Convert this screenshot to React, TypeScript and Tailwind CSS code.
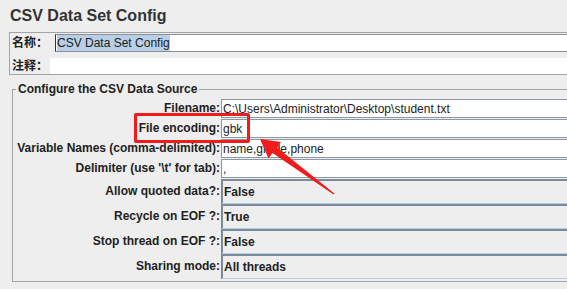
import React from "react";

const textRows = [
  { label: "Filename:", value: "C:\\Users\\Administrator\\Desktop\\student.txt" },
  { label: "File encoding:", value: "gbk" },
  { label: "Variable Names (comma-delimited):", value: "name,grade,phone" },
  { label: "Delimiter (use '\\t' for tab):", value: "," },
];

const comboRows = [
  { label: "Allow quoted data?:", value: "False" },
  { label: "Recycle on EOF ?:", value: "True" },
  { label: "Stop thread on EOF ?:", value: "False" },
  { label: "Sharing mode:", value: "All threads" },
];

const cjk = "font-['Liberation_Sans','Noto_Sans_CJK_SC',sans-serif] font-bold";

const Arrow = () => (
  <svg
    className="absolute left-0 top-0 pointer-events-none"
    width="567"
    height="289"
    viewBox="0 0 567 289"
  >
    <polygon
      points="260,139 281,142 277,147.5 334.4,193.5 333.6,194.5 272.5,153 268.5,158.5"
      fill="#f01b1b"
    />
  </svg>
);

export default function App() {
  return (
    <div className="relative w-[567px] h-[289px] overflow-hidden bg-[#eeeeee] font-['Liberation_Sans',sans-serif] text-[#222]">
      <h1 className="pl-[10px] pt-[7px] text-[16px] leading-[18px] font-bold text-[#333]">
        CSV Data Set Config
      </h1>

      {/* name / comment panel */}
      <div className="mt-[7px] ml-[9px] border-y border-l border-[#a3a3a3] pt-px">
        <div className="flex h-[18px]">
          <span className={`w-[45px] pl-[2px] text-[12px] leading-[18px] ${cjk}`}>名称：</span>
          <div className="flex-1 flex bg-white border-y border-l border-[#8a8f96] border-l-[#333]">
            <span className="ml-px h-full flex items-center bg-[#b8cfe5] text-[12px] leading-[14px]">
              CSV Data Set Config
            </span>
          </div>
        </div>
        <div className="flex h-[16px] mt-[6px]">
          <span className={`w-[40px] pl-[2px] text-[12px] leading-[16px] ${cjk}`}>注释：</span>
          <div className="flex-1 bg-white" />
        </div>
      </div>

      {/* fieldset */}
      <div className="relative mt-[14px] ml-[12px] border-y border-l border-[#a3a3a3] pt-[9px] pb-[2px]">
        <span className="absolute left-[3px] top-[-8px] px-[2px] bg-[#eeeeee] text-[12px] leading-[14px] font-bold">
          Configure the CSV Data Source
        </span>

        {textRows.map((r) => (
          <div key={r.label} className="flex h-[19px] mb-px">
            <span className="w-[207px] text-right text-[12px] leading-[19px] font-bold whitespace-nowrap">
              {r.label}
            </span>
            <div className="ml-px flex-1 flex items-center bg-white border-y border-l border-[#8d97a1] pl-px text-[12px] leading-[14px] whitespace-nowrap">
              {r.value}
            </div>
          </div>
        ))}

        {comboRows.map((r) => (
          <div key={r.label} className="flex h-[25px]">
            <span className="w-[207px] text-right text-[12px] leading-[25px] font-bold whitespace-nowrap">
              {r.label}
            </span>
            <div className="ml-px flex-1 flex items-center bg-[#eeeeee] border-t-2 border-l-2 border-b border-[#7a8a99] border-b-[#b8cfe5] pl-px text-[12px] leading-[14px] font-bold whitespace-nowrap">
              {r.value}
            </div>
          </div>
        ))}
      </div>

      {/* annotation */}
      <div className="absolute left-[134px] top-[113px] w-[116px] h-[30px] border-[3px] border-[#f01b1b] rounded-[2px] pointer-events-none" />
      <Arrow />
    </div>
  );
}
